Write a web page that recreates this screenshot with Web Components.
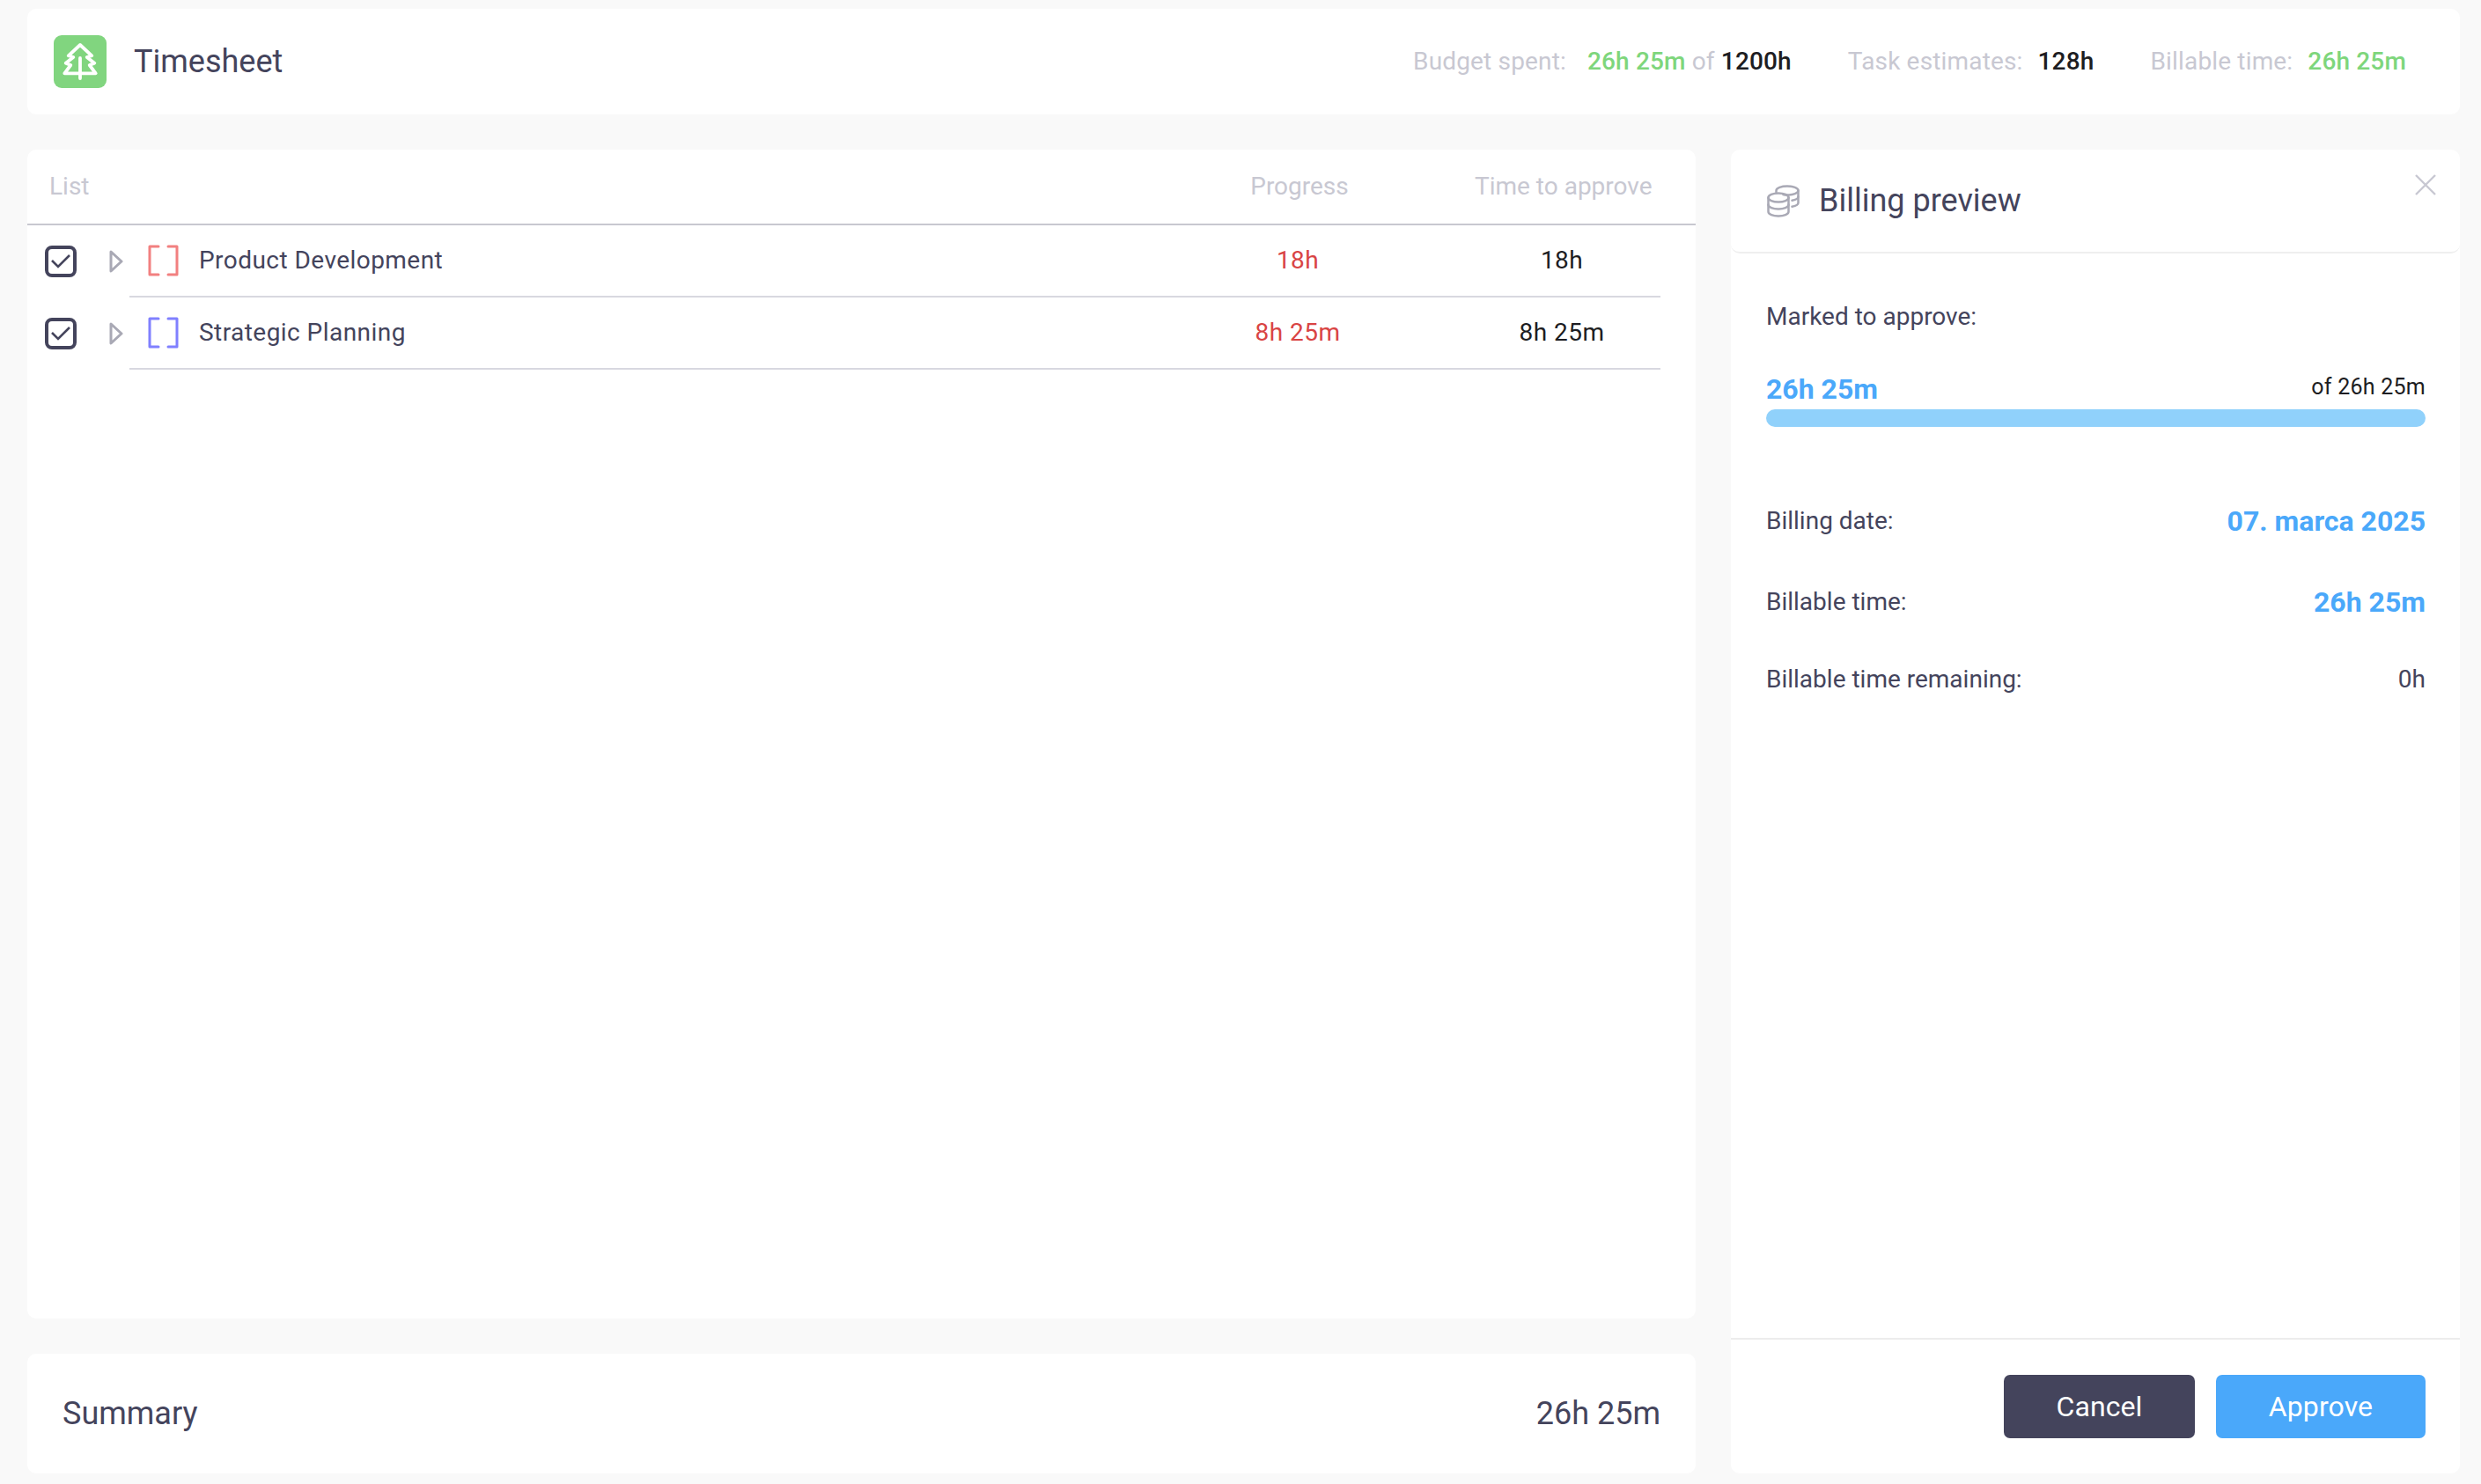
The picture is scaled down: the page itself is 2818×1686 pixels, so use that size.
<!DOCTYPE html>
<html lang="en">
<head>
<meta charset="utf-8">
<title>Timesheet</title>
<style>
html,body{margin:0;padding:0;background:#f9f9f9;font-family:Roboto,"Liberation Sans",sans-serif;}
</style>
</head>
<body>
<app-shell>
  <top-bar slot="top"></top-bar>
  <list-panel slot="list">
    <list-row name="Product Development" accent="#f28080" progress="18h" approve="18h"></list-row>
    <list-row name="Strategic Planning" accent="#8080ff" progress="8h 25m" approve="8h 25m"></list-row>
  </list-panel>
  <summary-bar slot="summary" label="Summary" value="26h 25m"></summary-bar>
  <billing-panel slot="billing">
    <billing-row label="Billing date:" value="07. marca 2025" strong style="height:92px"></billing-row>
    <billing-row label="Billable time:" value="26h 25m" strong style="height:92px"></billing-row>
    <billing-row label="Billable time remaining:" value="0h" style="height:84px"></billing-row>
  </billing-panel>
</app-shell>
<script>
function def(name, html){
  customElements.define(name, class extends HTMLElement{
    constructor(){super();this.attachShadow({mode:'open'}).innerHTML=typeof html==='function'?html(this):html;}
    connectedCallback(){
      if(typeof html==='function'&&!this._done){this._done=true;this.shadowRoot.innerHTML=html(this);}
    }
  });
}
def('app-shell',`<style>
:host{display:flex;flex-direction:column;box-sizing:border-box;height:1686px;padding:10px 24px 12px 31px;gap:40px;color:#44445c;}
.main{flex:1;display:flex;gap:40px;min-height:0;}
.left{width:1895px;display:flex;flex-direction:column;gap:40px;}
.right{flex:1;display:flex;min-width:0;}
</style>
<slot name="top"></slot>
<div class="main"><div class="left"><slot name="list"></slot><slot name="summary"></slot></div><div class="right"><slot name="billing"></slot></div></div>`);

def('top-bar',`<style>
:host{display:flex;align-items:center;height:120px;background:#fff;border-radius:10px;padding:0 61px 0 30px;box-sizing:border-box;}
.badge{width:60px;height:60px;border-radius:9px;background:#81d57f;display:flex;flex:none;}
h1{margin:0 0 0 31px;font:400 36px/1 Roboto,sans-serif;color:#44445c;flex:1;}
.stats{display:flex;font:400 28px/1 Roboto,sans-serif;letter-spacing:.16px;color:#c8c8d2;white-space:pre;}
.stat+.stat{margin-left:64px;}
.g{color:#7ed67c;font-weight:500;margin-left:24px;}
.k{color:#1d1d22;font-weight:500;}
.k.m{margin-left:17px;}
</style>
<div class="badge"><svg width="60" height="60" viewBox="0 0 60 60" fill="none" stroke="#fff" stroke-width="3.8" stroke-linejoin="round" stroke-linecap="round">
<path d="M30 11 L43.3 23.3 L37.7 25 L46.3 31.7 L40.7 34 L47.7 43.3 H12.3 L19.3 34 L13.7 31.7 L22.3 25 L16.7 23.3 Z"/><path d="M30 26 V49"/></svg></div>
<h1>Timesheet</h1>
<div class="stats"><span class="stat">Budget spent:<span class="g">26h 25m</span> of <span class="k">1200h</span></span><span class="stat">Task estimates:<span class="k m">128h</span></span><span class="stat">Billable time:<span class="g" style="margin-left:17px">26h 25m</span></span></div>`);

def('list-panel',`<style>
:host{display:block;flex:1;height:100%;background:#fff;border-radius:10px;}
.head{display:flex;align-items:center;height:84px;border-bottom:2px solid #c8c8d0;font:400 28px/1 Roboto,sans-serif;color:#c8c8d2;padding-left:25px;}
.head .a{flex:1;}
.head .p{width:300px;text-align:center;margin-right:38px;}
.head .t{width:262px;padding-left:11px;box-sizing:border-box;white-space:nowrap;}
</style>
<div class="head"><span class="a">List</span><span class="p">Progress</span><span class="t">Time to approve</span></div>
<slot></slot>`);

def('list-row',el=>`<style>
:host{display:flex;height:82px;}
.lead{width:116px;flex:none;display:flex;align-items:center;padding-left:20px;box-sizing:border-box;}
.chev{margin-left:37px;}
.body{width:1739px;display:flex;align-items:center;border-bottom:2px solid #d8d8e0;box-sizing:border-box;padding-left:21px;font:400 28px/1 Roboto,sans-serif;letter-spacing:.45px;color:#44445c;}
.name{flex:1;margin-left:23px;}
.p{width:300px;text-align:center;color:#d94444;margin-right:38px;}
.t{width:224px;text-align:center;color:#1d1d22;}
</style>
<div class="lead">
<svg width="36" height="36" viewBox="0 0 36 36" fill="none"><rect x="2" y="2" width="32" height="32" rx="6" stroke="#44445c" stroke-width="4"/><path d="M8 17 L15 24 L28 11" stroke="#44445c" stroke-width="2.6"/></svg>
<svg class="chev" width="16" height="26" viewBox="0 0 16 26" fill="none"><path d="M2 2 L14 13 L2 24 Z" stroke="#a9a9b5" stroke-width="3" stroke-linejoin="round"/></svg>
</div>
<div class="body">
<svg width="35" height="36" viewBox="0 0 35 36" fill="none" stroke="${el.getAttribute('accent')||'#888'}" stroke-width="3" stroke-linejoin="round" stroke-linecap="round"><path d="M12 2 H2 V34 H12 M23 2 H33 V34 H23"/></svg>
<span class="name">${el.getAttribute('name')||''}</span><span class="p">${el.getAttribute('progress')||''}</span><span class="t">${el.getAttribute('approve')||''}</span>
</div>`);

def('summary-bar',el=>`<style>
:host{display:flex;flex:none;align-items:center;justify-content:space-between;height:136px;background:#fff;border-radius:10px;padding:0 40px;box-sizing:border-box;font:400 36px/1 Roboto,sans-serif;color:#44445c;}
</style><span>${el.getAttribute('label')}</span><span>${el.getAttribute('value')}</span>`);

def('billing-panel',`<style>
:host{display:flex;flex-direction:column;flex:1;height:100%;background:#fff;border-radius:10px;color:#44445c;}
.head{height:116px;flex:none;display:flex;align-items:center;padding:0 27px 0 41px;border-bottom:2px solid #efefef;border-radius:0 0 10px 10px;}
.head h2{margin:0 0 0 22px;font:400 36px/1 Roboto,sans-serif;flex:1;}
.x{align-self:flex-start;margin-top:28px;}
.body{flex:1;padding:56px 39px 0 40px;display:flex;flex-direction:column;font:400 28px/1 Roboto,sans-serif;}
.m{height:32px;line-height:32px;}
.bar-l{display:flex;justify-content:space-between;align-items:flex-end;margin-top:50px;}
.bar-l b{font:700 32px/1 Roboto,sans-serif;color:#4aa8fa;}
.bar-l span{font-size:25px;color:#1d1d22;letter-spacing:.25px;padding-bottom:6px;}
.bar{height:20px;border-radius:10px;background:#90d1fb;margin:7px 0 61px;}
.foot{height:154px;flex:none;border-top:2px solid #ececec;box-sizing:border-box;display:flex;justify-content:flex-end;gap:24px;padding:40px 39px 0;}
.btn{height:72px;display:flex;align-items:center;justify-content:center;border-radius:7px;color:#fff;font:400 32px/1 Roboto,sans-serif;letter-spacing:.1px;box-sizing:border-box;}
.c{width:217px;background:#44445c;}
.o{width:238px;background:#4aa8fa;}
</style>
<div class="head">
<svg width="37" height="37" viewBox="0 0 37 37" fill="none" stroke="#a9a9b5" stroke-width="2.5" stroke-linecap="round">
<ellipse cx="13" cy="14.5" rx="11.5" ry="5"/>
<path d="M1.5 14.5 V30.5 C1.5 33.5 7 35.5 13 35.5 S24.5 33.5 24.5 30.5 V14.5"/>
<path d="M1.5 22.5 C1.5 25.5 7 27.5 13 27.5 S24.5 25.5 24.5 22.5"/>
<path d="M10.5 8.5 V6.5 C10.5 3.5 16.5 1.5 23 1.5 S35.5 3.5 35.5 6.5 V20.5 C35.5 22.5 32.5 24 28.5 24.8"/>
<path d="M35.5 6.5 C35.5 9.5 29.5 11.5 23 11.5 C21.5 11.5 20 11.4 18.5 11"/>
<path d="M35.5 13.5 C35.5 15.5 32.5 17 28.5 17.8"/>
</svg>
<h2>Billing preview</h2>
<svg class="x" width="24" height="24" viewBox="0 0 24 24" fill="none" stroke="#c8c8d2" stroke-width="2.4"><path d="M1 1 L23 23 M23 1 L1 23"/></svg>
</div>
<div class="body">
<div class="m">Marked to approve:</div>
<div class="bar-l"><b>26h 25m</b><span>of 26h 25m</span></div>
<div class="bar"></div>
<slot></slot>
</div>
<div class="foot"><div class="btn c">Cancel</div><div class="btn o">Approve</div></div>`);

def('billing-row',el=>`<style>
:host{display:flex;align-items:center;justify-content:space-between;flex:none;}
b{font:700 32px/1 Roboto,sans-serif;color:#4aa8fa;}
i{font-style:normal;}
</style><span>${el.getAttribute('label')}</span>${el.hasAttribute('strong')?`<b>${el.getAttribute('value')}</b>`:`<i>${el.getAttribute('value')}</i>`}`);
</script>
</body>
</html>
